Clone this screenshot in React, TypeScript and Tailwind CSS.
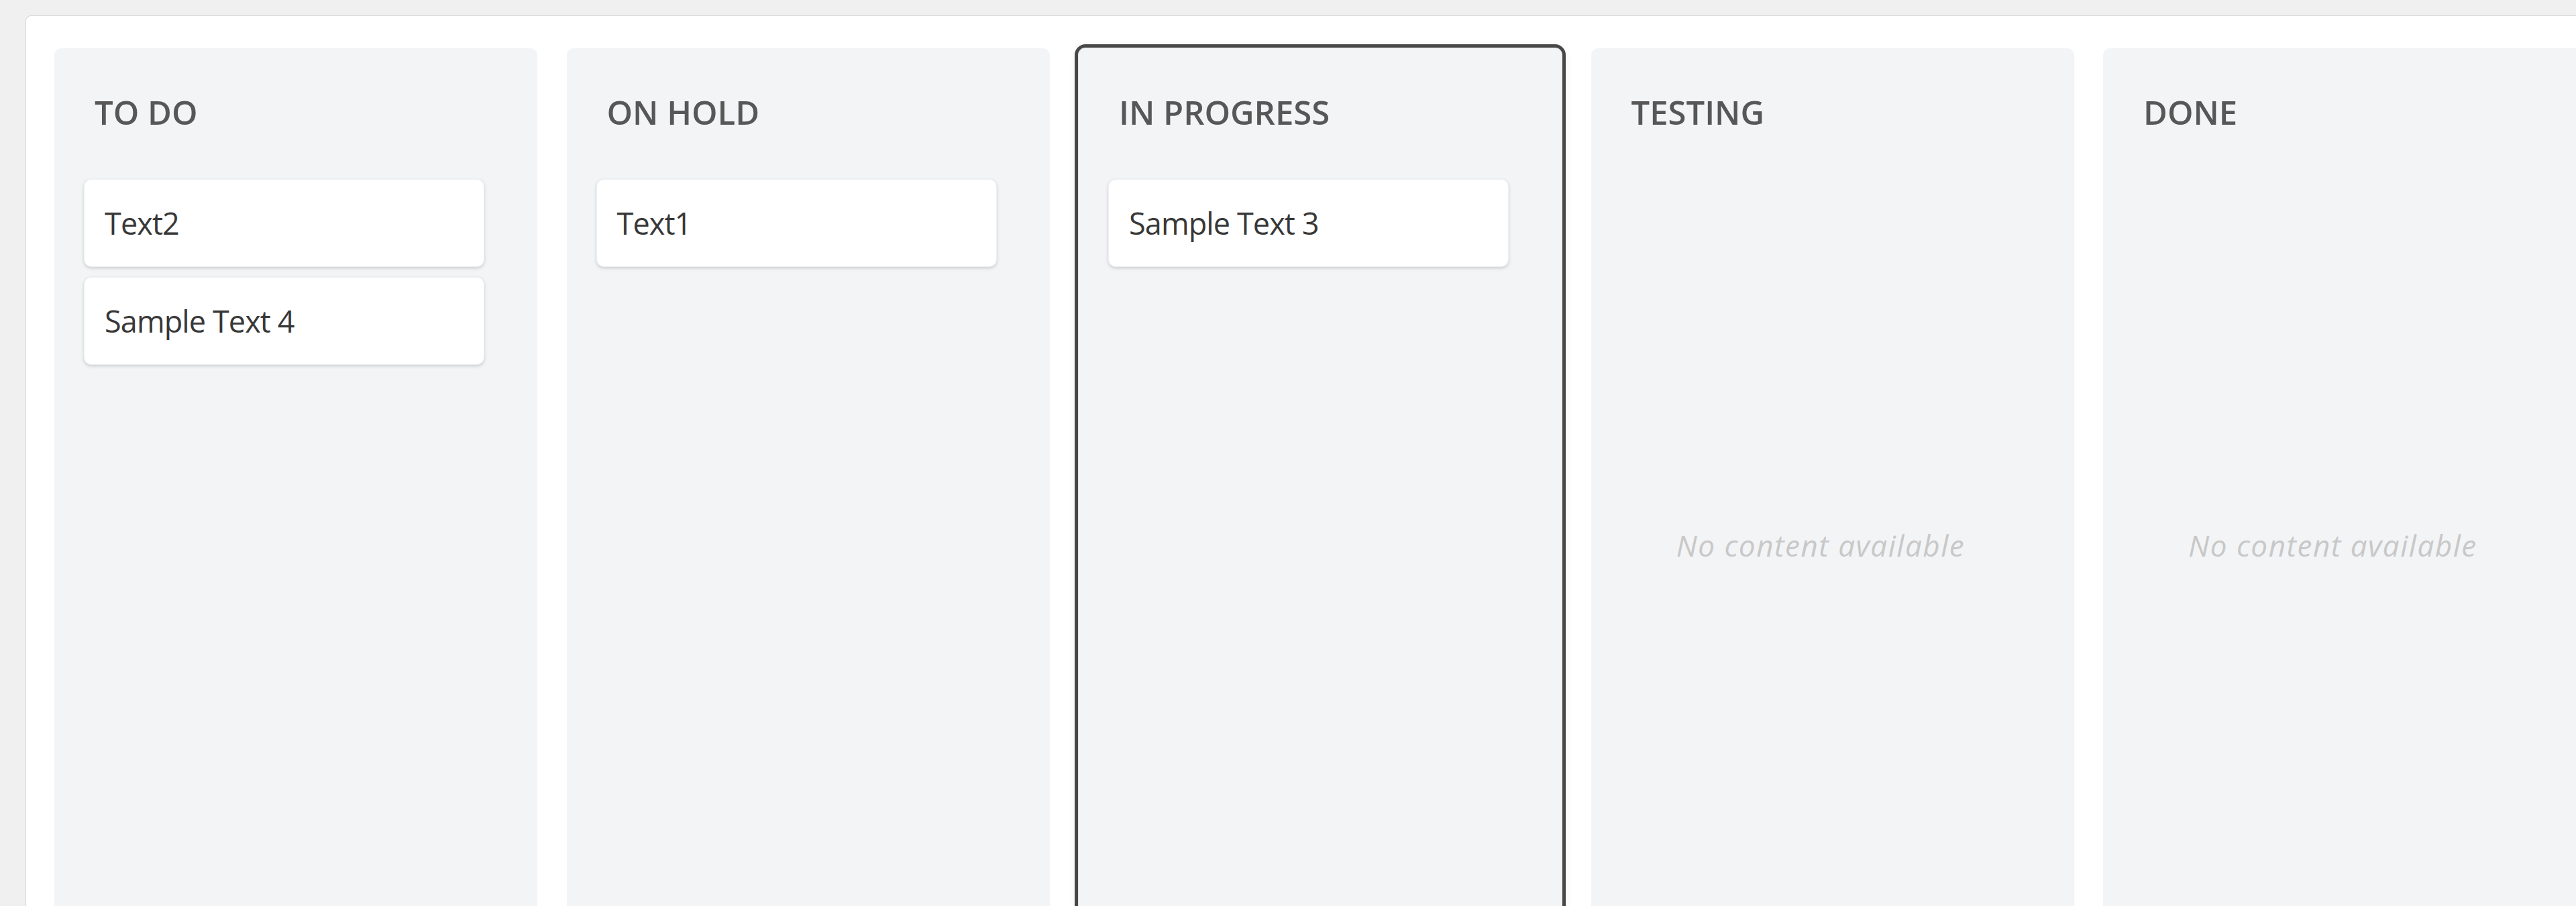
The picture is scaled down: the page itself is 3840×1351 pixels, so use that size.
import React from 'react';

type Column = {
    title: string;
    items: string[];
    active?: boolean;
};

const columns: Column[] = [
    { title: 'TO DO', items: ['Text2', 'Sample Text 4'] },
    { title: 'ON HOLD', items: ['Text1'] },
    { title: 'IN PROGRESS', items: ['Sample Text 3'], active: true },
    { title: 'TESTING', items: [] },
    { title: 'DONE', items: [] },
];

const Card: React.FC<{ text: string }> = ({ text }) => (
    <div className="flex h-[131px] items-center rounded-[11px] border border-[#eef0f3] bg-white px-[30px] text-[45px] tracking-[-0.9px] text-[#383838] shadow-[0_2px_5px_rgba(0,0,0,0.16)]">
        {text}
    </div>
);

const BoardColumn: React.FC<{ column: Column }> = ({ column }) => {
    const empty = column.items.length === 0;
    return (
        <div
            className={
                column.active
                    ? 'w-[720px] shrink-0 rounded-[10px] bg-[#f3f4f6] px-[44px] pt-[59px] pb-10 outline-[5px] outline-solid outline-[#474747] outline-offset-[1px] shadow-[0_0_14px_rgba(0,0,0,0.22)]'
                    : 'w-[720px] shrink-0 rounded-[10px] bg-[#f3f4f6] px-[44px] pt-[59px] pb-10'
            }
        >
            <h2 className="h-[73px] pl-[16px] text-[49px] font-semibold leading-[73px] text-[#575757]">
                {column.title}
            </h2>
            {empty ? (
                <div className="mt-[63px] flex min-h-[1091px] w-[597px] items-center justify-center">
                    <span className="text-[44px] italic tracking-[1.5px] text-[#c8c8c8]">No content available</span>
                </div>
            ) : (
                <div className="mt-[63px] flex min-h-[1091px] w-[597px] flex-col gap-[15px]">
                    {column.items.map(item => (
                        <Card key={item} text={item} />
                    ))}
                </div>
            )}
        </div>
    );
};

export default function App() {
    return (
        <div className="h-[1351px] w-full overflow-hidden bg-[#f0f0f0] pl-[38px] pt-[23px] font-['Open_Sans',sans-serif]">
            <div className="flex w-max gap-[43.5px] rounded-[8px] border border-[#d5d5d5] bg-white px-[42px] pt-[48px]">
                {columns.map(col => (
                    <BoardColumn key={col.title} column={col} />
                ))}
            </div>
        </div>
    );
}
